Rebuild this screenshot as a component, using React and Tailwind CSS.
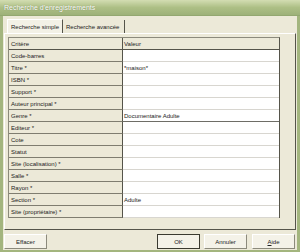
import React from "react";

const rows = [
  ["Code-barres", ""],
  ["Titre *", "*maison*"],
  ["ISBN *", ""],
  ["Support *", ""],
  ["Auteur principal *", ""],
  ["Genre *", "Documentaire Adulte"],
  ["Editeur *", ""],
  ["Cote", ""],
  ["Statut", ""],
  ["Site (localisation) *", ""],
  ["Salle *", ""],
  ["Rayon *", ""],
  ["Section *", "Adulte"],
  ["Site (propriétaire) *", ""],
];

function Btn({ children, dflt }) {
  return (
    <div
      className={
        "w-[43px] h-[15px] flex items-center justify-center text-[6px] leading-none text-[#222] bg-[#f4f2e8] border " +
        (dflt
          ? "border-[#3a3a30]"
          : "border-t-white border-l-white border-b-[#8c8a7c] border-r-[#8c8a7c]")
      }
    >
      {children}
    </div>
  );
}

export default function App() {
  return (
    <div
      className="w-[300px] h-[252px] flex flex-col bg-[#a3b57e] overflow-hidden"
      style={{ fontFamily: '"Liberation Sans", Arial, sans-serif' }}
    >
      {/* title bar */}
      <div className="h-[16px] shrink-0 flex items-center pl-[4px] bg-gradient-to-b from-[#d3ddb2] via-[#adbf85] to-[#9db179] border-b border-[#93a770]">
        <span className="text-[7px] text-white leading-none" style={{ textShadow: "0 0 1px #6d7f4c" }}>
          Recherche d'enregistrements
        </span>
      </div>
      {/* body */}
      <div className="flex-1 flex flex-col bg-[#ece9d8] mx-[3px] mb-[2px]">
        {/* tabs */}
        <div className="h-[17px] shrink-0 flex items-end pl-[4px]">
          <div className="h-[14px] w-[56px] flex items-center pl-[3px] bg-[#f3f1e6] border-l border-t border-white border-r border-r-[#55544a] text-[6px] leading-none text-[#222]">
            Recherche simple
          </div>
          <div className="h-[13px] w-[62px] flex items-center pl-[3px] border-r border-[#55544a] text-[6px] leading-none text-[#222]">
            Recherche avancée
          </div>
        </div>
        {/* panel */}
        <div className="w-[292px] h-[197px] ml-[1px] shrink-0 border-t border-l border-white border-r border-r-[#55544a] border-b border-b-[#55544a] pt-[3px] pl-[3px]">
          {/* grid */}
          <div className="w-[272px] flex flex-col border-r border-[#55544a] border-l border-l-[#8c8a7c] border-t border-t-[#8c8a7c]">
            <div className="h-[12px] flex border-b border-[#55544a]">
              <div className="w-[114px] flex items-center pl-[2px] text-[6px] leading-none text-[#222] border-r border-[#55544a]">
                Critère
              </div>
              <div className="flex-1 flex items-center pl-[1px] text-[6px] leading-none text-[#222]">
                Valeur
              </div>
            </div>
            {rows.map(([k, v], i) => (
              <div key={i} className="h-[12px] flex">
                <div className="w-[114px] flex items-center pl-[2px] text-[6px] leading-none text-[#222] border-r border-[#55544a] border-b border-b-[#7f7d70]">
                  {k}
                </div>
                <div
                  className={
                    "flex-1 flex items-center pl-[1px] bg-white text-[6px] leading-none text-[#222] border-b " +
                    (k === "Genre *" ? "border-[#6e6d66]" : "border-[#d8d6d0]")
                  }
                >
                  {v}
                </div>
              </div>
            ))}
          </div>
        </div>
        {/* footer */}
        <div className="flex-1 flex items-center pl-[1px] pr-[2px] pt-[3px]">
          <Btn>Effacer</Btn>
          <div className="flex-1" />
          <Btn dflt>OK</Btn>
          <div className="w-[4px]" />
          <Btn>Annuler</Btn>
          <div className="w-[5px]" />
          <Btn>
            <span className="underline">A</span>ide
          </Btn>
        </div>
      </div>
    </div>
  );
}
